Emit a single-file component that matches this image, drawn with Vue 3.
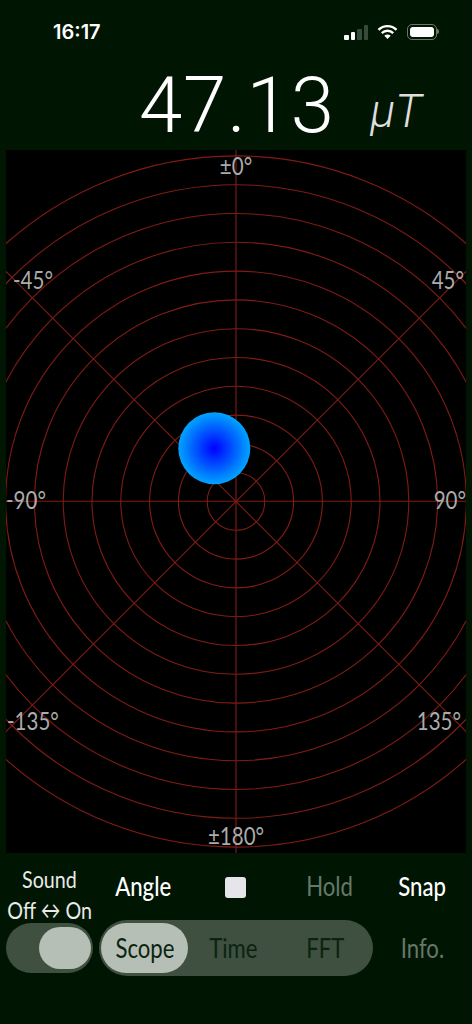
<script setup>
const cx = 230
const cy = 351.5
const rings = Array.from({ length: 12 }, (_, i) => (i + 1) * 28.8)
const diag = 500
const labels = [
  { t: '±0°', x: 230, y: 25, a: 'middle' },
  { t: '-45°', x: 7, y: 139, a: 'start' },
  { t: '45°', x: 458, y: 139, a: 'end' },
  { t: '-90°', x: 0, y: 359, a: 'start' },
  { t: '90°', x: 460, y: 359, a: 'end' },
  { t: '-135°', x: 1, y: 580, a: 'start' },
  { t: '135°', x: 455, y: 580, a: 'end' },
  { t: '±180°', x: 230, y: 695, a: 'middle' }
]
</script>

<template>
  <div class="screen">
    <div class="status">
      <span class="time">16:17</span>
      <div class="status-icons">
        <div class="signal">
          <i class="bar b1"></i><i class="bar b2"></i><i class="bar b3"></i><i class="bar b4"></i>
        </div>
        <svg class="wifi" width="21" height="16" viewBox="0 0 21 16">
          <path d="M1.5 5.8a12.8 12.8 0 0 1 18 0" fill="none" stroke="#fff" stroke-width="2.4" />
          <path d="M4.8 9.1a8.1 8.1 0 0 1 11.4 0" fill="none" stroke="#fff" stroke-width="2.4" />
          <path d="M7.3 11.7l3.2 3.4 3.2-3.4a4.6 4.6 0 0 0-6.4 0z" fill="#fff" />
        </svg>
        <div class="battery"><div class="battery-fill"></div><i class="nub"></i></div>
      </div>
    </div>

    <div class="reading">
      <span class="value">47.13</span>
      <span class="unit">μT</span>
    </div>

    <svg class="plot" width="460" height="703" viewBox="0 0 460 703">
      <defs>
        <radialGradient id="ball">
          <stop offset="0" stop-color="#0000ff" />
          <stop offset="1" stop-color="#00a4ff" />
        </radialGradient>
      </defs>
      <g fill="none" stroke="#801c15" stroke-width="1.1">
        <circle v-for="r in rings" :key="r" :cx="cx" :cy="cy" :r="r" />
        <line :x1="cx" y1="0" :x2="cx" y2="703" />
        <line x1="0" y1="351.2" x2="460" y2="351.2" />
        <line :x1="cx - diag" :y1="cy - diag" :x2="cx + diag" :y2="cy + diag" />
        <line :x1="cx - diag" :y1="cy + diag" :x2="cx + diag" :y2="cy - diag" />
      </g>
      <circle cx="208.3" cy="298.3" r="36" fill="url(#ball)" />
      <text
        v-for="l in labels"
        :key="l.t"
        class="angle"
        :transform="`translate(${l.x} ${l.y}) scale(0.82 1)`"
        :text-anchor="l.a"
      >{{ l.t }}</text>
    </svg>

    <div class="controls">
      <div class="row-top">
        <div class="cell sound"><span class="narrow">Sound</span><span class="narrow">Off ↔ On</span></div>
        <div class="cell big strong"><span class="narrow">Angle</span></div>
        <div class="cell"><div class="stop"></div></div>
        <div class="cell big dim"><span class="narrow">Hold</span></div>
        <div class="cell big strong"><span class="narrow">Snap</span></div>
      </div>
      <div class="row-bottom">
        <div class="toggle"><div class="toggle-thumb"></div></div>
        <div class="segment">
          <div class="seg on"><span class="narrow">Scope</span></div>
          <div class="seg"><span class="narrow">Time</span></div>
          <div class="seg"><span class="narrow">FFT</span></div>
        </div>
        <div class="info big dim"><span class="narrow">Info.</span></div>
      </div>
    </div>
  </div>
</template>

<style scoped>
.screen {
  width: 472px;
  height: 1024px;
  background: #001603;
  display: flex;
  flex-direction: column;
  overflow: hidden;
  font-family: Lato, "Liberation Sans", sans-serif;
}
.status {
  height: 64px;
  flex: none;
  display: flex;
  justify-content: space-between;
  align-items: center;
  padding: 0 35px 0 53px;
  color: #fff;
}
.time {
  font-family: Inter, sans-serif;
  font-weight: 600;
  font-size: 20px;
}
.status-icons {
  display: flex;
  align-items: center;
  gap: 9px;
}
.signal {
  display: flex;
  align-items: flex-end;
  gap: 2px;
  height: 15px;
}
.bar {
  width: 4.5px;
  border-radius: 1px;
  background: #3a4a3a;
  display: block;
}
.b1 { height: 5px; background: #fff; }
.b2 { height: 8px; background: #fff; }
.b3 { height: 11px; }
.b4 { height: 15px; }
.battery {
  position: relative;
  width: 30px;
  height: 16px;
  box-sizing: border-box;
  border: 1px solid #6b776b;
  border-radius: 5px;
  padding: 2px;
}
.battery-fill {
  height: 100%;
  background: #fff;
  border-radius: 3px;
}
.nub {
  position: absolute;
  right: -3px;
  top: 4px;
  width: 2px;
  height: 5px;
  background: #6b776b;
  border-radius: 0 2px 2px 0;
}
.reading {
  height: 86px;
  flex: none;
  display: flex;
  align-items: baseline;
  padding-left: 139px;
  color: #fff;
  font-family: Roboto, sans-serif;
  font-weight: 300;
}
.value {
  font-size: 78px;
  line-height: 84px;
  letter-spacing: 0.8px;
}
.unit {
  margin-left: 35.5px;
  font-size: 46px;
  font-style: italic;
  font-weight: 300;
  color: #dedede;
  position: relative;
  top: -5px;
}
.plot {
  display: block;
  flex: none;
  margin-left: 6px;
  background: #000;
}
.angle {
  fill: #ababab;
  font-size: 25px;
  font-family: Lato, "Liberation Sans", sans-serif;
}
.narrow {
  display: inline-block;
  white-space: nowrap;
  transform: scaleX(0.82);
}
.controls {
  flex: 1;
  display: flex;
  flex-direction: column;
}
.row-top {
  display: grid;
  grid-template-columns: repeat(5, minmax(0, 1fr));
  padding: 0 3px;
  height: 67px;
  box-sizing: border-box;
  align-items: start;
}
.cell {
  display: flex;
  justify-content: center;
  text-align: center;
}
.sound {
  flex-direction: column;
  align-items: center;
  margin-top: 10px;
  color: #e8ebe8;
  font-size: 24px;
  line-height: 31px;
}
.big {
  font-size: 27px;
  line-height: 34px;
}
.cell.big {
  margin-top: 16px;
}
.strong {
  color: #fff;
  font-weight: 500;
}
.dim {
  color: #66786a;
}
.stop {
  width: 21px;
  height: 21px;
  margin-top: 23.5px;
  border-radius: 3px;
  background: #e5e5ea;
}
.row-bottom {
  display: flex;
  align-items: center;
  gap: 6px;
  padding: 0 6px;
  height: 56px;
}
.toggle {
  width: 87px;
  height: 50px;
  box-sizing: border-box;
  padding: 4px 2px;
  border-radius: 25px;
  background: #3f4f40;
  display: flex;
  justify-content: flex-end;
}
.toggle-thumb {
  width: 52px;
  height: 42px;
  border-radius: 21px;
  background: #b5bfb6;
}
.segment {
  width: 274px;
  height: 56px;
  box-sizing: border-box;
  padding: 3px 2px;
  border-radius: 28px;
  background: #3f4f40;
  display: grid;
  grid-template-columns: 87px minmax(0, 1fr) minmax(0, 1fr);
}
.seg {
  display: flex;
  align-items: center;
  justify-content: center;
  font-size: 27px;
  line-height: 48px;
  color: #0b2410;
  border-radius: 25px;
}
.seg.on {
  background: #b5bfb6;
}
.info {
  flex: 1;
  text-align: center;
}
</style>

<style>
body {
  background: #001603;
}
</style>
